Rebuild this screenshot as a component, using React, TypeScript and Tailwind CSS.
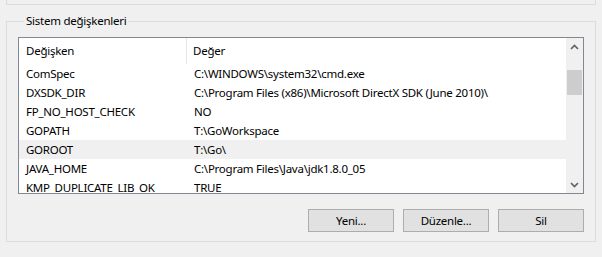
const degiskenler = [
  { ad: 'ComSpec', deger: 'C:\\WINDOWS\\system32\\cmd.exe' },
  { ad: 'DXSDK_DIR', deger: 'C:\\Program Files (x86)\\Microsoft DirectX SDK (June 2010)\\' },
  { ad: 'FP_NO_HOST_CHECK', deger: 'NO' },
  { ad: 'GOPATH', deger: 'T:\\GoWorkspace' },
  { ad: 'GOROOT', deger: 'T:\\Go\\', secili: true },
  { ad: 'JAVA_HOME', deger: 'C:\\Program Files\\Java\\jdk1.8.0_05' },
  { ad: 'KMP_DUPLICATE_LIB_OK', deger: 'TRUE' },
]

function Ok({ yukari }: { yukari?: boolean }) {
  return (
    <svg width="9" height="6" viewBox="0 0 9 6" className="block">
      <path
        d={yukari ? 'M1 5 L4.5 1.5 L8 5' : 'M1 1 L4.5 4.5 L8 1'}
        fill="none"
        stroke="#606060"
        strokeWidth="1.6"
      />
    </svg>
  )
}

export default function App() {
  return (
    <div className="w-[602px] h-[257px] overflow-hidden bg-[#f0f0f0] font-['Noto_Sans',sans-serif] text-[11.5px] tracking-[-0.25px] text-black">
      <div className="ml-[6px] h-[5px] w-[590px] border-x border-b border-[#dcdcdc]" />

      <fieldset className="ml-[6px] mt-[8px] w-[590px] border border-[#dcdcdc] pl-[11px] pr-[11px] pb-[9px] pt-[8px]">
        <legend className="ml-[6px] px-[2px] leading-[16px]">Sistem değişkenleri</legend>

        <div className="flex h-[157px] border border-[#828790] bg-white">
          <div className="flex-1 overflow-hidden">
            <div className="flex h-[26px] items-center">
              <div className="flex h-full w-[168px] items-center border-r border-[#e5e5e5] pl-[7px]">Değişken</div>
              <div className="pl-[6px]">Değer</div>
            </div>
            {degiskenler.map((d) => (
              <div
                key={d.ad}
                className={`flex h-[19px] items-center whitespace-nowrap ${d.secili ? 'bg-[#f0f0f0]' : ''}`}
              >
                <div className="w-[168px] pl-[7px]">{d.ad}</div>
                <div className="pl-[7px]">{d.deger}</div>
              </div>
            ))}
          </div>

          <div className="flex w-[17px] flex-col bg-[#f0f0f0]">
            <div className="flex h-[17px] items-center justify-center">
              <Ok yukari />
            </div>
            <div className="flex-1 px-[1px] pt-[15px]">
              <div className="h-[25px] bg-[#cdcdcd]" />
            </div>
            <div className="flex h-[17px] items-center justify-center">
              <Ok />
            </div>
          </div>
        </div>

        <div className="mt-[15px] flex justify-end gap-[9px]">
          {['Yeni...', 'Düzenle...', 'Sil'].map((b) => (
            <button
              key={b}
              className="h-[23px] w-[86px] border border-[#adadad] bg-[#e1e1e1] leading-none"
            >
              {b}
            </button>
          ))}
        </div>
      </fieldset>
    </div>
  )
}
